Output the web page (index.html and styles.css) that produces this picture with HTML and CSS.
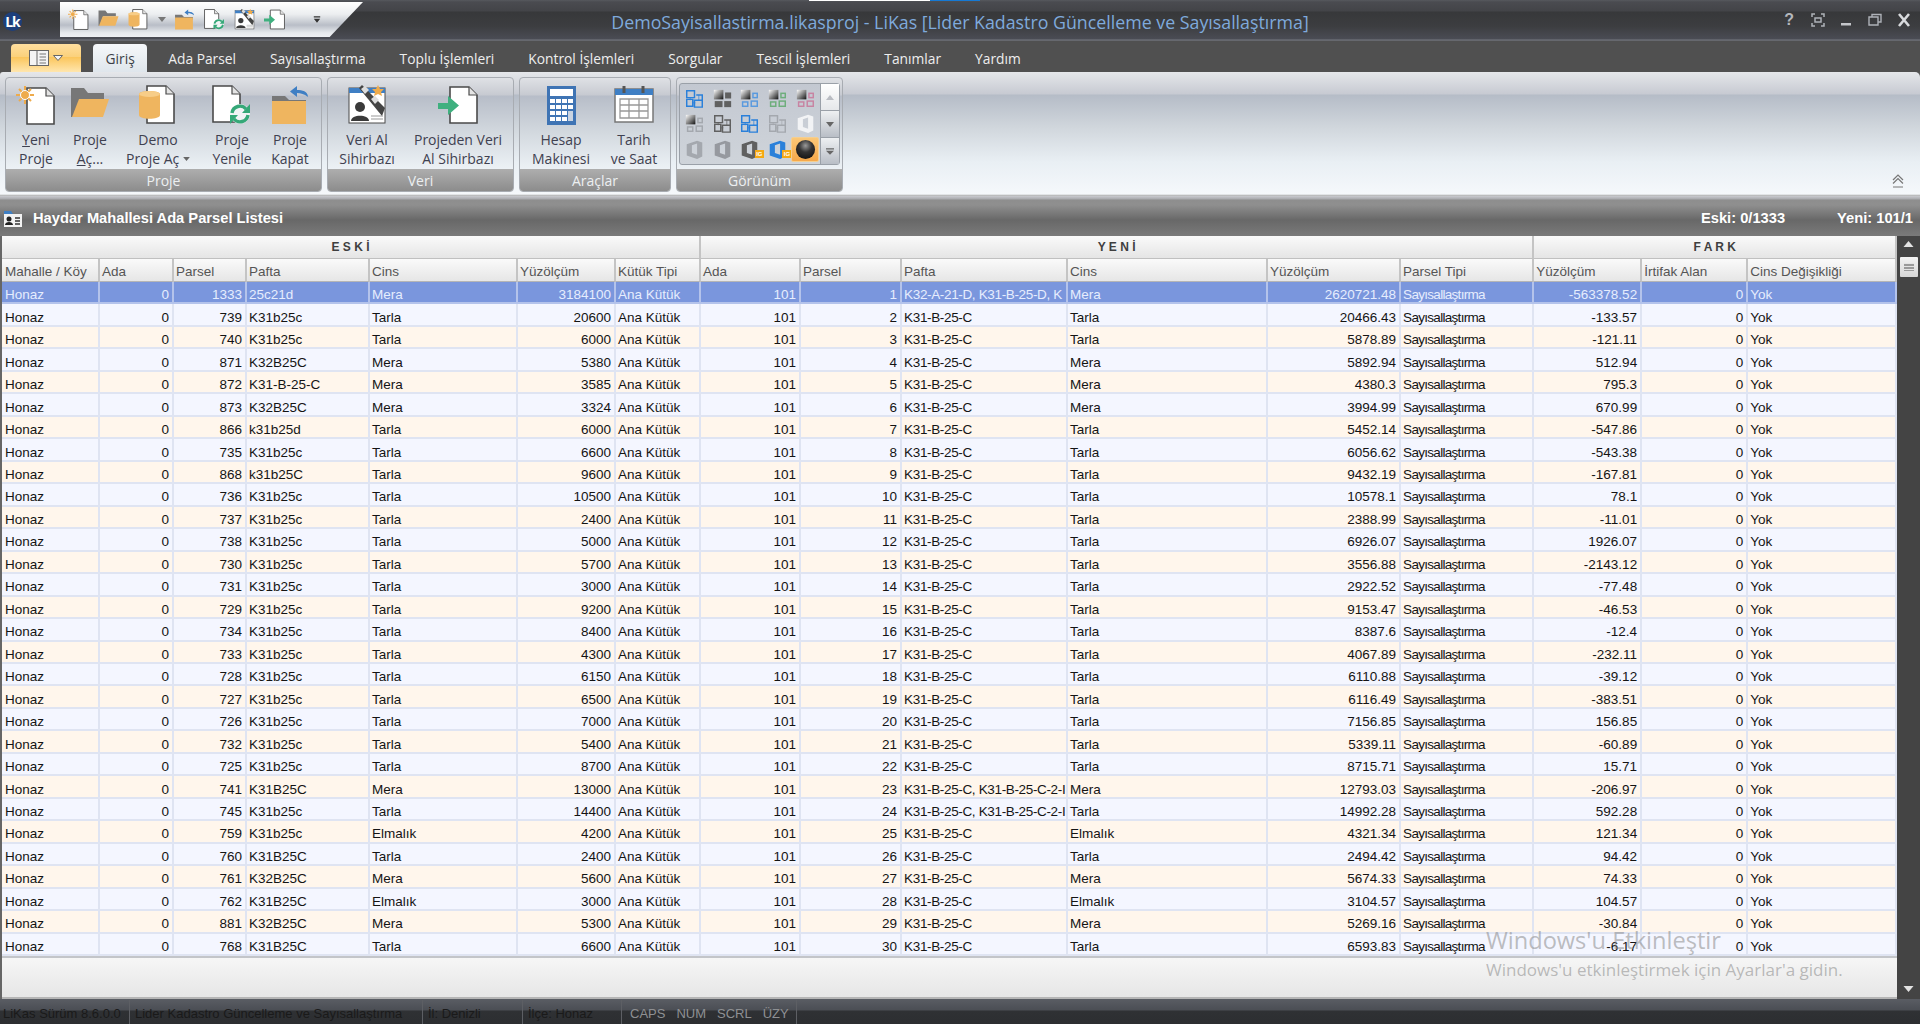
FILE: index.html
```html
<!DOCTYPE html>
<html lang="tr">
<head>
<meta charset="utf-8">
<title>LiKas</title>
<link rel="stylesheet" href="styles.css">
</head>
<body>
<svg class="defs" aria-hidden="true">
  <defs>
    <linearGradient id="gw" x1="0" y1="0" x2="1" y2="1"><stop offset="0" stop-color="#fff"/><stop offset="1" stop-color="currentColor"/></linearGradient>
    <radialGradient id="ball" cx=".5" cy=".3" r=".75"><stop offset="0" stop-color="#9a9a9a"/><stop offset=".45" stop-color="#333"/><stop offset="1" stop-color="#111"/></radialGradient>
    <symbol id="i-new" viewBox="0 0 40 40"><path d="M11 3H30L38 11V39H11Z" fill="#fff" stroke="#4a4a4a" stroke-width="1.6"/><path d="M30 3V11H38" fill="#e4e4e4" stroke="#4a4a4a" stroke-width="1.2"/><g stroke="#eeab4c" stroke-width="2"><path d="M9 1V19M0 10H18M3 4L15 16M15 4L3 16"/></g><circle cx="9" cy="10" r="4.5" fill="#eeab4c" stroke="#fff"/></symbol>
    <symbol id="i-open" viewBox="0 0 40 40"><path d="M1 3H14L18 8H34V14H10L3 32H1Z" fill="#777"/><path d="M9 14H39L33 32H2Z" fill="#efb55f"/></symbol>
    <symbol id="i-demo" viewBox="0 0 40 40"><path d="M9 1H28L36 9V38H9Z" fill="#fff" stroke="#4a4a4a" stroke-width="1.6"/><path d="M28 1V9H36" fill="#e4e4e4" stroke="#4a4a4a" stroke-width="1.2"/><path d="M1 9C1 5 22 5 22 9V30C22 35 1 35 1 30Z" fill="#efb55f"/><ellipse cx="11.500" cy="9" rx="10.500" ry="3" fill="#f7cd88"/></symbol>
    <symbol id="i-refresh" viewBox="0 0 40 40"><path d="M1 1H20L28 9V37H1Z" fill="#fff" stroke="#4a4a4a" stroke-width="1.6"/><path d="M20 1V9H28" fill="#e4e4e4" stroke="#4a4a4a" stroke-width="1.2"/><circle cx="28" cy="29" r="10" fill="#f1f3f5"/><path d="M20 28A8 8 0 0 1 34 24M36 30A8 8 0 0 1 22 34" fill="none" stroke="#35a878" stroke-width="3.400"/><path d="M38 19V28H30ZM18 39V30H26Z" fill="#35a878"/></symbol>
    <symbol id="i-close" viewBox="0 0 40 40"><path d="M2 11H15L19 15H36V20H2Z" fill="#777"/><path d="M2 16H36V39H2Z" fill="#efb55f"/><path d="M38 12C38 6 32 5 27 5V1L20 6.500 27 12V8C31 8 34 9 38 12Z" fill="#3f7fc4"/></symbol>
    <symbol id="i-wiz" viewBox="0 0 40 40"><rect x="2" y="3" width="36" height="35" fill="#fff" stroke="#4a4a4a"/><path d="M2 3H38V8H2Z" fill="#3f7fc4"/><circle cx="13" cy="22" r="5" fill="#3a3a3a"/><path d="M4 36C4 29 22 29 22 36Z" fill="#3a3a3a"/><path d="M12 3L15 0 38 23 35 31Z" fill="#444"/><path d="M14 4L18 1 22 5 18 9ZM24 14L28 11 32 15 28 19Z" fill="#ddd"/><path d="M24 31H36M24 34H36" stroke="#999"/><path d="M31 0L33 4 37 4 34 7 35 11 31 9 27 11 28 7 25 4 29 4Z" fill="#eeab4c"/></symbol>
    <symbol id="i-imp" viewBox="0 0 40 40"><path d="M12 2H31L39 10V38H12Z" fill="#fff" stroke="#4a4a4a" stroke-width="1.6"/><path d="M31 2V10H39" fill="#e4e4e4" stroke="#4a4a4a" stroke-width="1.2"/><path d="M0 18H10V11L21 20.500 10 30V24H0Z" fill="#3fb07f"/></symbol>
    <symbol id="i-calc" viewBox="0 0 40 40"><rect x="6" y="1" width="29" height="39" fill="#3f74b4"/><rect x="9" y="4" width="23" height="7" fill="#fff"/><path d="M9 14h5v4H9zM15 14h5v4h-5zM21 14h5v4h-5zM27 14h5v4h-5zM9 20h5v4H9zM15 20h5v4h-5zM21 20h5v4h-5zM27 20h5v4h-5zM9 26h5v4H9zM15 26h5v4h-5zM21 26h5v4h-5zM9 32h5v4H9zM15 32h5v4h-5zM21 32h5v4h-5z" fill="#fff"/><path d="M27 26h5v10h-5z" fill="#c9d4e2"/></symbol>
    <symbol id="i-cal" viewBox="0 0 40 40"><rect x="1" y="4" width="38" height="33" fill="#fff" stroke="#777" stroke-width="1.5"/><path d="M1 4H39V10H1Z" fill="#3f7fc4"/><path d="M10 1V8M29 1V8" stroke="#555" stroke-width="3"/><path d="M6 14H34V33H6ZM6 20H34M6 26H34M15 14V33M25 14V33" fill="none" stroke="#999" stroke-width="1.300"/></symbol>
    <symbol id="g-knot" viewBox="0 0 22 22"><g fill="none" stroke="currentColor"><path stroke-width="1.700" d="M2 2H11V10H2ZM13 7H20V13M2 12H9V20H2ZM11 13H20V21H11Z"/><path stroke-width=".8" d="M6 10V13M16 13V7M9 16H12"/></g></symbol>
    <symbol id="g-sq" viewBox="0 0 22 22"><rect x="1" y="1" width="11" height="11" fill="url(#gw)"/><g fill="none" stroke="currentColor" stroke-width="1.700"><rect x="15" y="5" width="5" height="5"/><rect x="3" y="15" width="6" height="5"/><rect x="13" y="14" width="7" height="6"/></g></symbol>
    <symbol id="g-sqd" viewBox="0 0 22 22"><rect x="1" y="1" width="11" height="11" fill="url(#gw)"/><g fill="currentColor"><rect x="14" y="4" width="7" height="7"/><rect x="2" y="14" width="9" height="7"/><rect x="13" y="14" width="8" height="7"/></g></symbol>
    <symbol id="g-off" viewBox="0 0 22 22"><path d="M2 5L14 1 20 3V19L14 22 2 18ZM8 6V15L14 17V4Z" fill="currentColor" fill-rule="evenodd"/></symbol>
    <symbol id="up" viewBox="0 0 10 6"><path d="M0 6L5 0 10 6Z" fill="currentColor"/></symbol>
    <symbol id="dn" viewBox="0 0 10 6"><path d="M0 0L5 6 10 0Z" fill="currentColor"/></symbol>
  </defs>
</svg>

<header class="titlebar">
  <div class="tb-left">
    <span class="logo">Lk</span>
    <div class="qat">
      <svg class="qi"><use href="#i-new"/></svg>
      <svg class="qi"><use href="#i-open"/></svg>
      <svg class="qi"><use href="#i-demo"/></svg>
      <svg class="qdrop"><use href="#dn"/></svg>
      <svg class="qi"><use href="#i-close"/></svg>
      <svg class="qi"><use href="#i-refresh"/></svg>
      <svg class="qi"><use href="#i-wiz"/></svg>
      <svg class="qi"><use href="#i-imp"/></svg>
      <svg class="qcust" viewBox="0 0 10 8"><path d="M1 0H9V1.500H1ZM1 3H9L5 8Z" fill="#333"/></svg>
    </div>
  </div>
  <h1 class="apptitle">DemoSayisallastirma.likasproj - LiKas [Lider Kadastro Güncelleme ve Sayısallaştırma]</h1>
  <div class="winbtns">
    <span class="wq">?</span>
    <svg class="wb" viewBox="0 0 14 14"><path d="M1 4V1H4M10 1H13V4M13 10V13H10M4 13H1V10" fill="none" stroke="#aeb2b8" stroke-width="1.500"/><rect x="4" y="5" width="6" height="4" fill="none" stroke="#aeb2b8" stroke-width="1.500"/></svg>
    <svg class="wb" viewBox="0 0 14 14"><rect x="1" y="10" width="10" height="2.500" fill="#c4c6ca"/></svg>
    <svg class="wb" viewBox="0 0 14 14"><path d="M1 4H10V12H1ZM4 4V1.500H13V9H10" fill="none" stroke="#aeb2b8" stroke-width="1.400"/></svg>
    <svg class="wb" viewBox="0 0 14 14"><path d="M2 1L12 13M12 1L2 13" stroke="#d8dadd" stroke-width="2.600"/></svg>
  </div>
</header>

<nav class="tabs">
  <div class="filebtn">
    <svg class="fb-ic" viewBox="0 0 20 16"><rect x=".5" y=".5" width="19" height="15" fill="#f4f4f4" stroke="#666"/><path d="M8 .5V15.500" stroke="#666"/><path d="M10.500 4H17M10.500 7H17M10.500 10H17M10.500 13H17" stroke="#777"/></svg>
    <svg class="fb-dn" viewBox="0 0 10 6"><path d="M.5 .5L5 5.500 9.500 .5Z" fill="#f5f5f5" stroke="#666"/></svg>
  </div>
  <span class="tab active">Giriş</span>
  <span class="tab">Ada Parsel</span>
  <span class="tab">Sayısallaştırma</span>
  <span class="tab">Toplu İşlemleri</span>
  <span class="tab">Kontrol İşlemleri</span>
  <span class="tab">Sorgular</span>
  <span class="tab">Tescil İşlemleri</span>
  <span class="tab">Tanımlar</span>
  <span class="tab">Yardım</span>
</nav>

<section class="ribbon">
  <div class="rgroup g-proje">
    <div class="rbtns">
      <div class="rb w-54"><svg class="ric"><use href="#i-new"/></svg><span><u>Y</u>eni<br>Proje</span></div>
      <div class="rb w-54"><svg class="ric"><use href="#i-open"/></svg><span>Proje<br><u>A</u>ç...</span></div>
      <div class="rb w-82"><svg class="ric"><use href="#i-demo"/></svg><span>Demo<br>Proje Aç <svg class="tiny"><use href="#dn"/></svg></span></div>
      <div class="rb w-66"><svg class="ric"><use href="#i-refresh"/></svg><span>Proje<br>Yenile</span></div>
      <div class="rb w-50"><svg class="ric"><use href="#i-close"/></svg><span>Proje<br>Kapat</span></div>
    </div>
    <div class="rlabel">Proje</div>
  </div>
  <div class="rgroup g-veri">
    <div class="rbtns">
      <div class="rb w-72"><svg class="ric"><use href="#i-wiz"/></svg><span>Veri Al<br>Sihirbazı</span></div>
      <div class="rb w-110"><svg class="ric"><use href="#i-imp"/></svg><span>Projeden Veri<br>Al Sihirbazı</span></div>
    </div>
    <div class="rlabel">Veri</div>
  </div>
  <div class="rgroup g-arac">
    <div class="rbtns">
      <div class="rb w-76"><svg class="ric"><use href="#i-calc"/></svg><span>Hesap<br>Makinesi</span></div>
      <div class="rb w-70"><svg class="ric"><use href="#i-cal"/></svg><span>Tarih<br>ve Saat</span></div>
    </div>
    <div class="rlabel">Araçlar</div>
  </div>
  <div class="rgroup g-gor">
    <div class="gallery">
      <div class="gcells">
        <span class="gc c-blue"><svg><use href="#g-knot"/></svg></span>
        <span class="gc c-dark"><svg><use href="#g-sqd"/></svg></span>
        <span class="gc c-lblue"><svg><use href="#g-sq"/></svg></span>
        <span class="gc c-green"><svg><use href="#g-sq"/></svg></span>
        <span class="gc c-pink"><svg><use href="#g-sq"/></svg></span>
        <span class="gc c-lgray"><svg><use href="#g-sq"/></svg></span>
        <span class="gc c-dark"><svg><use href="#g-knot"/></svg></span>
        <span class="gc c-blue"><svg><use href="#g-knot"/></svg></span>
        <span class="gc c-lgray"><svg><use href="#g-knot"/></svg></span>
        <span class="gc c-white"><svg><use href="#g-off"/></svg></span>
        <span class="gc c-lgray"><svg><use href="#g-off"/></svg></span>
        <span class="gc c-mgray"><svg><use href="#g-off"/></svg></span>
        <span class="gc c-dark"><svg><use href="#g-off"/></svg><b class="ig">IG</b></span>
        <span class="gc c-blue"><svg><use href="#g-off"/></svg><b class="ig">IG</b></span>
        <span class="gc gc-sel"><svg viewBox="0 0 22 22"><circle cx="11" cy="11" r="10" fill="url(#ball)"/></svg></span>
      </div>
      <div class="gscroll">
        <span class="gs gs-up"><svg><use href="#up"/></svg></span>
        <span class="gs"><svg><use href="#dn"/></svg></span>
        <span class="gs gs-more"><svg viewBox="0 0 10 8"><path d="M0 0H10V1.500H0ZM0 3H10L5 8Z" fill="currentColor"/></svg></span>
      </div>
    </div>
    <div class="rlabel">Görünüm</div>
  </div>
  <svg class="collapse" viewBox="0 0 12 14"><path d="M1 6L6 1 11 6M1 9.500L6 4.500 11 9.500M1 13H11" fill="none" stroke="#777" stroke-width="1.200"/></svg>
</section>

<div class="panelhead">
  <svg class="ph-ic" viewBox="0 0 18 16"><path d="M0 3V0H7L9 3Z" fill="#3f7fc4"/><rect y="3" width="18" height="13" fill="#f2f2f2"/><circle cx="5" cy="8" r="2.500" fill="#222"/><path d="M1 14C1 10 9 10 9 14Z" fill="#222"/><path d="M11 7H16M11 10H16M11 13H16" stroke="#333" stroke-width="1.300"/></svg>
  <span class="ph-title">Haydar Mahallesi Ada Parsel Listesi</span>
  <span class="ph-stat">Eski: 0/1333</span>
  <span class="ph-stat">Yeni: 101/1</span>
</div>

<main class="gridarea">
  <div class="gridmain">
    <table class="dg">
      <colgroup>
        <col class="c98"><col class="c74"><col class="c73"><col class="c123"><col class="c148"><col class="c98"><col class="c85">
        <col class="c100"><col class="c101"><col class="c166"><col class="c200"><col class="c133"><col class="c133">
        <col class="c108"><col class="c106"><col class="c149">
      </colgroup>
      <thead>
        <tr class="grp"><th colspan="7">E S K İ</th><th colspan="6">Y E N İ</th><th colspan="3">F A R K</th></tr>
        <tr class="hdr"><th>Mahalle / Köy</th><th>Ada</th><th>Parsel</th><th>Pafta</th><th>Cins</th><th>Yüzölçüm</th><th>Kütük Tipi</th><th>Ada</th><th>Parsel</th><th>Pafta</th><th>Cins</th><th>Yüzölçüm</th><th>Parsel Tipi</th><th>Yüzölçüm</th><th>İrtifak Alan</th><th>Cins Değişikliği</th></tr>
      </thead>
      <tbody>
        <tr class="sel"><td>Honaz</td><td class="n">0</td><td class="n">1333</td><td>25c21d</td><td>Mera</td><td class="n">3184100</td><td>Ana Kütük</td><td class="n">101</td><td class="n">1</td><td>K32-A-21-D, K31-B-25-D, K</td><td>Mera</td><td class="n">2620721.48</td><td class="tp">Sayısallaştırma</td><td class="n">-563378.52</td><td class="n">0</td><td>Yok</td></tr>
        <tr><td>Honaz</td><td class="n">0</td><td class="n">739</td><td>K31b25c</td><td>Tarla</td><td class="n">20600</td><td>Ana Kütük</td><td class="n">101</td><td class="n">2</td><td>K31-B-25-C</td><td>Tarla</td><td class="n">20466.43</td><td class="tp">Sayısallaştırma</td><td class="n">-133.57</td><td class="n">0</td><td>Yok</td></tr>
        <tr><td>Honaz</td><td class="n">0</td><td class="n">740</td><td>K31b25c</td><td>Tarla</td><td class="n">6000</td><td>Ana Kütük</td><td class="n">101</td><td class="n">3</td><td>K31-B-25-C</td><td>Tarla</td><td class="n">5878.89</td><td class="tp">Sayısallaştırma</td><td class="n">-121.11</td><td class="n">0</td><td>Yok</td></tr>
        <tr><td>Honaz</td><td class="n">0</td><td class="n">871</td><td>K32B25C</td><td>Mera</td><td class="n">5380</td><td>Ana Kütük</td><td class="n">101</td><td class="n">4</td><td>K31-B-25-C</td><td>Mera</td><td class="n">5892.94</td><td class="tp">Sayısallaştırma</td><td class="n">512.94</td><td class="n">0</td><td>Yok</td></tr>
        <tr><td>Honaz</td><td class="n">0</td><td class="n">872</td><td>K31-B-25-C</td><td>Mera</td><td class="n">3585</td><td>Ana Kütük</td><td class="n">101</td><td class="n">5</td><td>K31-B-25-C</td><td>Mera</td><td class="n">4380.3</td><td class="tp">Sayısallaştırma</td><td class="n">795.3</td><td class="n">0</td><td>Yok</td></tr>
        <tr><td>Honaz</td><td class="n">0</td><td class="n">873</td><td>K32B25C</td><td>Mera</td><td class="n">3324</td><td>Ana Kütük</td><td class="n">101</td><td class="n">6</td><td>K31-B-25-C</td><td>Mera</td><td class="n">3994.99</td><td class="tp">Sayısallaştırma</td><td class="n">670.99</td><td class="n">0</td><td>Yok</td></tr>
        <tr><td>Honaz</td><td class="n">0</td><td class="n">866</td><td>k31b25d</td><td>Tarla</td><td class="n">6000</td><td>Ana Kütük</td><td class="n">101</td><td class="n">7</td><td>K31-B-25-C</td><td>Tarla</td><td class="n">5452.14</td><td class="tp">Sayısallaştırma</td><td class="n">-547.86</td><td class="n">0</td><td>Yok</td></tr>
        <tr><td>Honaz</td><td class="n">0</td><td class="n">735</td><td>K31b25c</td><td>Tarla</td><td class="n">6600</td><td>Ana Kütük</td><td class="n">101</td><td class="n">8</td><td>K31-B-25-C</td><td>Tarla</td><td class="n">6056.62</td><td class="tp">Sayısallaştırma</td><td class="n">-543.38</td><td class="n">0</td><td>Yok</td></tr>
        <tr><td>Honaz</td><td class="n">0</td><td class="n">868</td><td>k31b25C</td><td>Tarla</td><td class="n">9600</td><td>Ana Kütük</td><td class="n">101</td><td class="n">9</td><td>K31-B-25-C</td><td>Tarla</td><td class="n">9432.19</td><td class="tp">Sayısallaştırma</td><td class="n">-167.81</td><td class="n">0</td><td>Yok</td></tr>
        <tr><td>Honaz</td><td class="n">0</td><td class="n">736</td><td>K31b25c</td><td>Tarla</td><td class="n">10500</td><td>Ana Kütük</td><td class="n">101</td><td class="n">10</td><td>K31-B-25-C</td><td>Tarla</td><td class="n">10578.1</td><td class="tp">Sayısallaştırma</td><td class="n">78.1</td><td class="n">0</td><td>Yok</td></tr>
        <tr><td>Honaz</td><td class="n">0</td><td class="n">737</td><td>K31b25c</td><td>Tarla</td><td class="n">2400</td><td>Ana Kütük</td><td class="n">101</td><td class="n">11</td><td>K31-B-25-C</td><td>Tarla</td><td class="n">2388.99</td><td class="tp">Sayısallaştırma</td><td class="n">-11.01</td><td class="n">0</td><td>Yok</td></tr>
        <tr><td>Honaz</td><td class="n">0</td><td class="n">738</td><td>K31b25c</td><td>Tarla</td><td class="n">5000</td><td>Ana Kütük</td><td class="n">101</td><td class="n">12</td><td>K31-B-25-C</td><td>Tarla</td><td class="n">6926.07</td><td class="tp">Sayısallaştırma</td><td class="n">1926.07</td><td class="n">0</td><td>Yok</td></tr>
        <tr><td>Honaz</td><td class="n">0</td><td class="n">730</td><td>K31b25c</td><td>Tarla</td><td class="n">5700</td><td>Ana Kütük</td><td class="n">101</td><td class="n">13</td><td>K31-B-25-C</td><td>Tarla</td><td class="n">3556.88</td><td class="tp">Sayısallaştırma</td><td class="n">-2143.12</td><td class="n">0</td><td>Yok</td></tr>
        <tr><td>Honaz</td><td class="n">0</td><td class="n">731</td><td>K31b25c</td><td>Tarla</td><td class="n">3000</td><td>Ana Kütük</td><td class="n">101</td><td class="n">14</td><td>K31-B-25-C</td><td>Tarla</td><td class="n">2922.52</td><td class="tp">Sayısallaştırma</td><td class="n">-77.48</td><td class="n">0</td><td>Yok</td></tr>
        <tr><td>Honaz</td><td class="n">0</td><td class="n">729</td><td>K31b25c</td><td>Tarla</td><td class="n">9200</td><td>Ana Kütük</td><td class="n">101</td><td class="n">15</td><td>K31-B-25-C</td><td>Tarla</td><td class="n">9153.47</td><td class="tp">Sayısallaştırma</td><td class="n">-46.53</td><td class="n">0</td><td>Yok</td></tr>
        <tr><td>Honaz</td><td class="n">0</td><td class="n">734</td><td>K31b25c</td><td>Tarla</td><td class="n">8400</td><td>Ana Kütük</td><td class="n">101</td><td class="n">16</td><td>K31-B-25-C</td><td>Tarla</td><td class="n">8387.6</td><td class="tp">Sayısallaştırma</td><td class="n">-12.4</td><td class="n">0</td><td>Yok</td></tr>
        <tr><td>Honaz</td><td class="n">0</td><td class="n">733</td><td>K31b25c</td><td>Tarla</td><td class="n">4300</td><td>Ana Kütük</td><td class="n">101</td><td class="n">17</td><td>K31-B-25-C</td><td>Tarla</td><td class="n">4067.89</td><td class="tp">Sayısallaştırma</td><td class="n">-232.11</td><td class="n">0</td><td>Yok</td></tr>
        <tr><td>Honaz</td><td class="n">0</td><td class="n">728</td><td>K31b25c</td><td>Tarla</td><td class="n">6150</td><td>Ana Kütük</td><td class="n">101</td><td class="n">18</td><td>K31-B-25-C</td><td>Tarla</td><td class="n">6110.88</td><td class="tp">Sayısallaştırma</td><td class="n">-39.12</td><td class="n">0</td><td>Yok</td></tr>
        <tr><td>Honaz</td><td class="n">0</td><td class="n">727</td><td>K31b25c</td><td>Tarla</td><td class="n">6500</td><td>Ana Kütük</td><td class="n">101</td><td class="n">19</td><td>K31-B-25-C</td><td>Tarla</td><td class="n">6116.49</td><td class="tp">Sayısallaştırma</td><td class="n">-383.51</td><td class="n">0</td><td>Yok</td></tr>
        <tr><td>Honaz</td><td class="n">0</td><td class="n">726</td><td>K31b25c</td><td>Tarla</td><td class="n">7000</td><td>Ana Kütük</td><td class="n">101</td><td class="n">20</td><td>K31-B-25-C</td><td>Tarla</td><td class="n">7156.85</td><td class="tp">Sayısallaştırma</td><td class="n">156.85</td><td class="n">0</td><td>Yok</td></tr>
        <tr><td>Honaz</td><td class="n">0</td><td class="n">732</td><td>K31b25c</td><td>Tarla</td><td class="n">5400</td><td>Ana Kütük</td><td class="n">101</td><td class="n">21</td><td>K31-B-25-C</td><td>Tarla</td><td class="n">5339.11</td><td class="tp">Sayısallaştırma</td><td class="n">-60.89</td><td class="n">0</td><td>Yok</td></tr>
        <tr><td>Honaz</td><td class="n">0</td><td class="n">725</td><td>K31b25c</td><td>Tarla</td><td class="n">8700</td><td>Ana Kütük</td><td class="n">101</td><td class="n">22</td><td>K31-B-25-C</td><td>Tarla</td><td class="n">8715.71</td><td class="tp">Sayısallaştırma</td><td class="n">15.71</td><td class="n">0</td><td>Yok</td></tr>
        <tr><td>Honaz</td><td class="n">0</td><td class="n">741</td><td>K31B25C</td><td>Mera</td><td class="n">13000</td><td>Ana Kütük</td><td class="n">101</td><td class="n">23</td><td>K31-B-25-C, K31-B-25-C-2-I</td><td>Mera</td><td class="n">12793.03</td><td class="tp">Sayısallaştırma</td><td class="n">-206.97</td><td class="n">0</td><td>Yok</td></tr>
        <tr><td>Honaz</td><td class="n">0</td><td class="n">745</td><td>K31b25c</td><td>Tarla</td><td class="n">14400</td><td>Ana Kütük</td><td class="n">101</td><td class="n">24</td><td>K31-B-25-C, K31-B-25-C-2-I</td><td>Tarla</td><td class="n">14992.28</td><td class="tp">Sayısallaştırma</td><td class="n">592.28</td><td class="n">0</td><td>Yok</td></tr>
        <tr><td>Honaz</td><td class="n">0</td><td class="n">759</td><td>K31b25c</td><td>Elmalık</td><td class="n">4200</td><td>Ana Kütük</td><td class="n">101</td><td class="n">25</td><td>K31-B-25-C</td><td>Elmalık</td><td class="n">4321.34</td><td class="tp">Sayısallaştırma</td><td class="n">121.34</td><td class="n">0</td><td>Yok</td></tr>
        <tr><td>Honaz</td><td class="n">0</td><td class="n">760</td><td>K31B25C</td><td>Tarla</td><td class="n">2400</td><td>Ana Kütük</td><td class="n">101</td><td class="n">26</td><td>K31-B-25-C</td><td>Tarla</td><td class="n">2494.42</td><td class="tp">Sayısallaştırma</td><td class="n">94.42</td><td class="n">0</td><td>Yok</td></tr>
        <tr><td>Honaz</td><td class="n">0</td><td class="n">761</td><td>K32B25C</td><td>Mera</td><td class="n">5600</td><td>Ana Kütük</td><td class="n">101</td><td class="n">27</td><td>K31-B-25-C</td><td>Mera</td><td class="n">5674.33</td><td class="tp">Sayısallaştırma</td><td class="n">74.33</td><td class="n">0</td><td>Yok</td></tr>
        <tr><td>Honaz</td><td class="n">0</td><td class="n">762</td><td>K31B25C</td><td>Elmalık</td><td class="n">3000</td><td>Ana Kütük</td><td class="n">101</td><td class="n">28</td><td>K31-B-25-C</td><td>Elmalık</td><td class="n">3104.57</td><td class="tp">Sayısallaştırma</td><td class="n">104.57</td><td class="n">0</td><td>Yok</td></tr>
        <tr><td>Honaz</td><td class="n">0</td><td class="n">881</td><td>K32B25C</td><td>Mera</td><td class="n">5300</td><td>Ana Kütük</td><td class="n">101</td><td class="n">29</td><td>K31-B-25-C</td><td>Mera</td><td class="n">5269.16</td><td class="tp">Sayısallaştırma</td><td class="n">-30.84</td><td class="n">0</td><td>Yok</td></tr>
        <tr><td>Honaz</td><td class="n">0</td><td class="n">768</td><td>K31B25C</td><td>Tarla</td><td class="n">6600</td><td>Ana Kütük</td><td class="n">101</td><td class="n">30</td><td>K31-B-25-C</td><td>Tarla</td><td class="n">6593.83</td><td class="tp">Sayısallaştırma</td><td class="n">-6.17</td><td class="n">0</td><td>Yok</td></tr>
      </tbody>
    </table>
    <div class="gridfoot"></div>
  </div>
  <aside class="vscroll">
    <svg class="va"><use href="#up"/></svg>
    <span class="thumb"></span>
    <svg class="va va-dn"><use href="#dn"/></svg>
  </aside>
</main>

<footer class="status">
  <span class="st s-ver">LiKas Sürüm 8.6.0.0</span>
  <span class="st s-app">Lider Kadastro Güncelleme ve Sayısallaştırma</span>
  <span class="st s-il">İl: Denizli</span>
  <span class="st s-ilce">İlçe: Honaz</span>
  <span class="st s-keys"><i>CAPS</i><i>NUM</i><i>SCRL</i><i>ÜZY</i></span>
</footer>

<div class="activate">
  <div class="act-1">Windows'u Etkinleştir</div>
  <div class="act-2">Windows'u etkinleştirmek için Ayarlar'a gidin.</div>
</div>
<div class="topstrip"><span class="ts-w"></span><span class="ts-b"></span></div>
</body>
</html>
```

FILE: styles.css
```css
* { box-sizing: border-box; }
html, body { margin: 0; height: 100%; }
body {
  width: 1920px; height: 1024px; overflow: hidden; position: relative;
  display: flex; flex-direction: column;
  background: #555; font-family: "Liberation Sans", Arial, sans-serif; font-size: 13px; color: #111;
}
.defs { position: absolute; width: 0; height: 0; }

/* title bar */
.titlebar {
  flex: 0 0 41px; display: grid; grid-template-columns: 1fr auto 1fr; align-items: center;
  background: linear-gradient(#57595e 0, #4a4b50 2px, #434448 11px, #37383a 12px, #3c3d40 26px, #4a4c54 39px, #777a82 40px, #55565a 41px);
}
.tb-left { display: flex; align-items: center; height: 100%; }
.logo {
  width: 19px; height: 19px; margin: 2px 0 0 3px; border-radius: 50%; background: #1d3f7c; color: #fff;
  font: bold 14px/19px "Open Sans", sans-serif; text-align: center; letter-spacing: -1px; flex: none;
}
.qat {
  margin: 0 0 2px 38px; width: 303px; height: 35px; flex: none; display: flex; align-items: center; padding: 0 0 0 8px;
  background: linear-gradient(#fff 0, #eceef0 35%, #b9bec7 66%, #e6e9ed 88%, #eef0f3 100%);
  clip-path: polygon(0 0, 100% 0, 89% 100%, 0 100%);
}
.qi { width: 21px; height: 21px; margin-right: 9px; flex: none; }
.qdrop { width: 8px; height: 5px; color: #777; margin: 0 8px 0 0; flex: none; }
.qcust { width: 8px; height: 7px; margin-left: 19px; flex: none; }
.apptitle { margin: 0; font: 400 17.800px/24px "Open Sans", sans-serif; color: #7faadc; white-space: nowrap; padding-top: 2px; }
.winbtns { display: flex; justify-content: flex-end; align-items: center; gap: 14.700px; padding: 0 9px 2px 0; }
.wq { width: 14px; font: bold 16px/14px "Liberation Sans", sans-serif; color: #b4b7bb; text-align: center; }
.wb { width: 14px; height: 14px; }

/* tabs */
.tabs { flex: 0 0 31px; display: flex; align-items: flex-end; padding: 0 0 0 11px; background: #505050; }
.filebtn {
  width: 70px; height: 28px; margin-right: 12px; display: flex; align-items: center; justify-content: center; gap: 4px;
  border-radius: 4px 4px 0 0; background: linear-gradient(#ffdf9e 0, #fbd17c 45%, #fbc55a 46%, #ffe6ae 100%);
}
.fb-ic { width: 20px; height: 16px; }
.fb-dn { width: 10px; height: 6px; }
.tab { height: 28px; padding: 0 17px; font: 13.800px/30px "Open Sans", sans-serif; color: #eeeeee; white-space: nowrap; }
.tab.active {
  padding: 0 12.500px; margin-right: 4px; color: #3c3f46; border-radius: 4px 4px 0 0;
  background: linear-gradient(#f6f8fa, #dfe6ec);
}

/* ribbon */
.ribbon {
  flex: 0 0 124px; position: relative; display: flex; gap: 5px; padding: 5px 0 0 5px;
  border-radius: 3px 5px 0 0;
  background: linear-gradient(#e5e7ea 0, #c7cad2 22px, #b5bcc7 23px, #d0d6dc 55px, #e9eff4 90px, #f5f8fb 122px, #a8a8a8 124px);
}
.rgroup {
  height: 115px; display: flex; flex-direction: column; border: 1px solid #a8acb2; border-radius: 4px; overflow: hidden;
  background: linear-gradient(#dfe1e5 0, #c7cad1 17px, #b7bdc8 18px, #d3d9df 55px, #edf2f6 92px);
}
.g-proje { width: 317px; }
.g-veri { width: 187px; }
.g-arac { width: 152px; }
.g-gor { width: 167px; }
.rbtns { flex: 1; display: flex; padding: 7px 0 0 3px; min-height: 0; }
.rb { display: flex; flex-direction: column; align-items: center; font: 14px/19px "Open Sans", sans-serif; color: #3f4150; text-align: center; white-space: nowrap; }
.rb span { margin-top: 5px; }
.ric { width: 40px; height: 40px; flex: none; }
.tiny { width: 7px; height: 4px; color: #666; vertical-align: 3px; }
.w-54 { width: 54px; } .w-82 { width: 82px; } .w-66 { width: 66px; } .w-50 { width: 50px; }
.w-72 { width: 72px; } .w-110 { width: 110px; } .w-76 { width: 76px; } .w-70 { width: 70px; }
.rlabel {
  flex: 0 0 22px; text-align: center; font: 14px/24px "Open Sans", sans-serif; color: #eceff1; overflow: hidden;
  background: linear-gradient(#aeaeae, #8c8c8c);
}
.gallery {
  flex: 1; margin: 5px 2px 4px 2px; display: flex; min-height: 0; border: 1px solid #9aa0a8; border-radius: 3px;
  background: linear-gradient(#c3c8d1, #cfd4da);
}
.gcells { flex: 1; display: grid; grid-template-columns: repeat(5, 1fr); grid-template-rows: repeat(3, 1fr); padding: 2px 1px; }
.gc { position: relative; display: flex; align-items: center; justify-content: center; }
.gc svg { width: 19px; height: 19px; }
.gc-sel { background: linear-gradient(#fbc777, #f5a84a); border: 1px solid #f5cf90; border-radius: 2px; }
.gc-sel svg { width: 21px; height: 21px; }
.c-blue { color: #2a80da; } .c-dark { color: #606060; } .c-lblue { color: #5a9ade; } .c-green { color: #6eae7c; }
.c-pink { color: #c884a2; } .c-lgray { color: #a4a8ae; } .c-mgray { color: #96999f; } .c-white { color: #f2f3f5; }
.ig {
  position: absolute; right: 0; bottom: 4px; width: 9px; height: 8px; background: #f5a913; color: #fff;
  font: bold 6px/8px "Liberation Sans", sans-serif; text-align: center;
}
.gscroll { flex: 0 0 19px; display: flex; flex-direction: column; border-left: 1px solid #9aa0a8; }
.gs { flex: 1; display: flex; align-items: center; justify-content: center; color: #666; border-top: 1px solid #9aa0a8; background: linear-gradient(#eef0f2, #b9bec6); }
.gs svg { width: 8px; height: 5px; }
.gs-up { border-top: 0; color: #b9bcc2; background: linear-gradient(#fff, #e6e8ea); }
.gs-more svg { height: 7px; }
.collapse { position: absolute; right: 16px; top: 102px; width: 12px; height: 14px; }

/* panel head */
.panelhead {
  flex: 0 0 40px; display: flex; align-items: center; padding: 4px 7px 0 4px; gap: 52px;
  background: linear-gradient(#c9cacf 0, #a9aaae 3px, #8e8e8e 4px, #8f8f8f 9px, #686868 24px, #7a7a7a 40px);
}
.ph-ic { width: 18px; height: 16px; margin: 2px 11px 0 0; flex: none; }
.ph-title { flex: 1; margin-left: -52px; font: bold 14.700px/20px "Liberation Sans", sans-serif; color: #fff; }
.ph-stat { font: bold 14.700px/20px "Liberation Sans", sans-serif; color: #fff; }

/* data grid */
.gridarea { flex: 1; display: flex; min-height: 0; padding-left: 2px; background: #666; }
.gridmain { flex: 0 0 1895px; display: flex; flex-direction: column; }
.dg { width: 1895px; table-layout: fixed; border-collapse: separate; border-spacing: 0; font-size: 13.500px; }
.c98 { width: 98px; } .c74 { width: 74px; } .c73 { width: 73px; } .c123 { width: 123px; } .c148 { width: 148px; }
.c85 { width: 85px; } .c100 { width: 100px; } .c101 { width: 101px; } .c166 { width: 166px; }
.c200 { width: 200px; } .c133 { width: 133px; } .c108 { width: 108px; } .c106 { width: 106px; } .c149 { width: 149px; }
.dg th { font-weight: normal; text-align: left; white-space: nowrap; overflow: hidden; }
.grp th {
  height: 23px; padding: 0; text-align: center; font: bold 12px/22px "Liberation Sans", sans-serif; color: #3f3f3f;
  background: linear-gradient(#fafafa, #e5e5e5); border-right: 2px solid #c4c4c4; border-bottom: 1px solid #c0c0c0;
}
.hdr th {
  height: 23px; padding: 4px 0 0 2px; font-size: 13.500px; line-height: 18px; color: #555;
  background: linear-gradient(#fafafa, #e6e6e6); border-right: 2px solid #c4c4c4; border-bottom: 1px solid #b5b5b5;
}
.hdr th:first-child { padding-left: 3px; }
.dg td {
  height: 22.480px; padding: 5px 0 0 2px; line-height: 15px; white-space: nowrap; overflow: hidden; color: #141414;
  border-right: 2px solid #dfe4f2; border-bottom: 2px solid #dfe4f2;
}
.dg td:first-child { padding-left: 3px; }
.dg td.n { text-align: right; padding-right: 3px; }
.dg td.tp { letter-spacing: -.7px; }
.dg td:nth-child(10) { letter-spacing: -.35px; }
.dg tbody tr:nth-child(even) td { background: #f4f6ff; }
.dg tbody tr:nth-child(odd) td { background: #fff6ec; }
.dg tbody tr.sel td { background: #7a96dd; color: #e6edfd; border-color: #b4c3eb; }
.gridfoot { flex: 1; background: linear-gradient(#f6f6f6, #e6e6e6); border-top: 2px solid #c3c5c9; border-bottom: 2px solid #b5b5b5; }
.vscroll {
  flex: 0 0 23px; display: flex; flex-direction: column; align-items: center; padding: 5px 0 7px; background: #444; color: #e2e2e2;
}
.va { width: 11px; height: 6px; flex: none; }
.va-dn { margin-top: auto; }
.thumb {
  width: 18px; height: 20px; margin-top: 10px; border-radius: 1px; flex: none;
  background: repeating-linear-gradient(#e4e4e4 0 1px, #9a9a9a 1px 3px) center / 10px 8px no-repeat, linear-gradient(#f3f3f3, #d7d7d7);
}

/* status bar */
.status {
  flex: 0 0 25px; display: flex; align-items: flex-end;
  background: linear-gradient(#5a5d64 0, #4b4e54 11px, #2f3134 12px, #2c2e31 25px);
}
.st { height: 24px; line-height: 28px; padding-left: 3px; color: #1a1a1a; border-right: 1px solid #5d5f64; white-space: nowrap; overflow: hidden; font-size: 13px; }
.s-ver { width: 130px; }
.s-app { width: 293px; padding-left: 5px; }
.s-il { width: 100px; padding-left: 5px; }
.s-ilce { width: 99px; padding-left: 5px; }
.s-keys { width: 175px; padding-left: 8px; display: flex; gap: 11px; color: #8e9093; }
.s-keys i { font-style: normal; }

/* overlays */
.activate { position: absolute; left: 1486px; top: 922px; font-family: "Open Sans", sans-serif; color: rgba(130, 130, 130, .52); white-space: nowrap; pointer-events: none; }
.act-1 { font-size: 23.600px; line-height: 36px; }
.act-2 { font-size: 17px; line-height: 24px; }
.topstrip { position: absolute; left: 809px; top: 0; height: 1px; display: flex; }
.ts-w { width: 121px; background: #fff; }
.ts-b { width: 50px; background: #1679d4; }
```
